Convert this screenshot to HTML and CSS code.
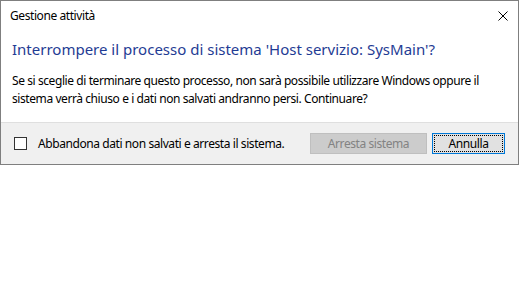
FILE: index.html
```html
<!DOCTYPE html>
<html lang="it">
<head>
    <meta charset="UTF-8">
    <title>Gestione attività</title>
    <link rel="stylesheet" href="styles.css">
</head>
<body>
    <div class="dialog">
        <div class="titlebar">
            <span class="caption">Gestione attività</span>
            <span class="close">
                <svg width="10" height="10" viewBox="0 0 10 10">
                    <path d="M0.5 0.5 L9.5 9.5 M9.5 0.5 L0.5 9.5" stroke="#000" stroke-width="1" fill="none"/>
                </svg>
            </span>
        </div>

        <div class="content">
            <div class="instruction">Interrompere il processo di sistema 'Host servizio: SysMain'?</div>
            <div class="message">Se si sceglie di terminare questo processo, non sarà possibile utilizzare Windows oppure il sistema verrà chiuso e i dati non salvati andranno persi. Continuare?</div>
        </div>

        <div class="footer">
            <label class="check">
                <span class="box"></span>
                Abbandona dati non salvati e arresta il sistema.
            </label>
            <div class="buttons">
                <button class="btn" disabled>Arresta sistema</button>
                <button class="btn default"><span class="focus">Annulla</span></button>
            </div>
        </div>
    </div>
</body>
</html>
```

FILE: styles.css
```css
body {
    margin: 0;
    background: #fff;
    font-family: "Noto Sans", sans-serif;
    font-size: 12px;
    letter-spacing: -0.42px;
    color: #000;
}
.dialog {
    box-sizing: border-box;
    width: 519px;
    height: 165px;
    border: 1px solid #7f7f7f;
    background: #fff;
    display: flex;
    flex-direction: column;
}
.titlebar {
    height: 29px;
    display: flex;
    align-items: center;
    justify-content: space-between;
    padding-left: 9px;
    padding-right: 10px;
}
.caption {
    line-height: 16px;
}
.close {
    display: flex;
}
.content {
    flex: 1;
    padding: 9px 10px 0 11px;
}
.instruction {
    font-size: 15px;
    line-height: 20px;
    letter-spacing: 0;
    color: #1f3c94;
}
.message {
    margin-top: 13px;
    line-height: 18px;
}
.footer {
    height: 41px;
    background: #f0f0f0;
    border-top: 1px solid #dfdfdf;
    display: flex;
    align-items: center;
    justify-content: space-between;
    padding: 0 13px 0 13px;
}
.check {
    display: flex;
    align-items: center;
    gap: 11px;
}
.box {
    box-sizing: border-box;
    width: 13px;
    height: 13px;
    border: 1px solid #333;
    background: #fff;
}
.buttons {
    display: flex;
    gap: 5px;
}
.btn {
    box-sizing: border-box;
    height: 21px;
    font-family: inherit;
    font-size: 12px;
    letter-spacing: inherit;
    padding: 0;
    background: #e1e1e1;
    border: 1px solid #adadad;
    color: #000;
}
.btn[disabled] {
    width: 117px;
    background: #cccccc;
    border-color: #bfbfbf;
    color: #838383;
}
.btn.default {
    width: 73px;
    border-color: #0078d7;
    padding: 1px;
}
.focus {
    display: flex;
    align-items: center;
    justify-content: center;
    height: 100%;
    border: 1px dotted #000;
    box-sizing: border-box;
}
```
